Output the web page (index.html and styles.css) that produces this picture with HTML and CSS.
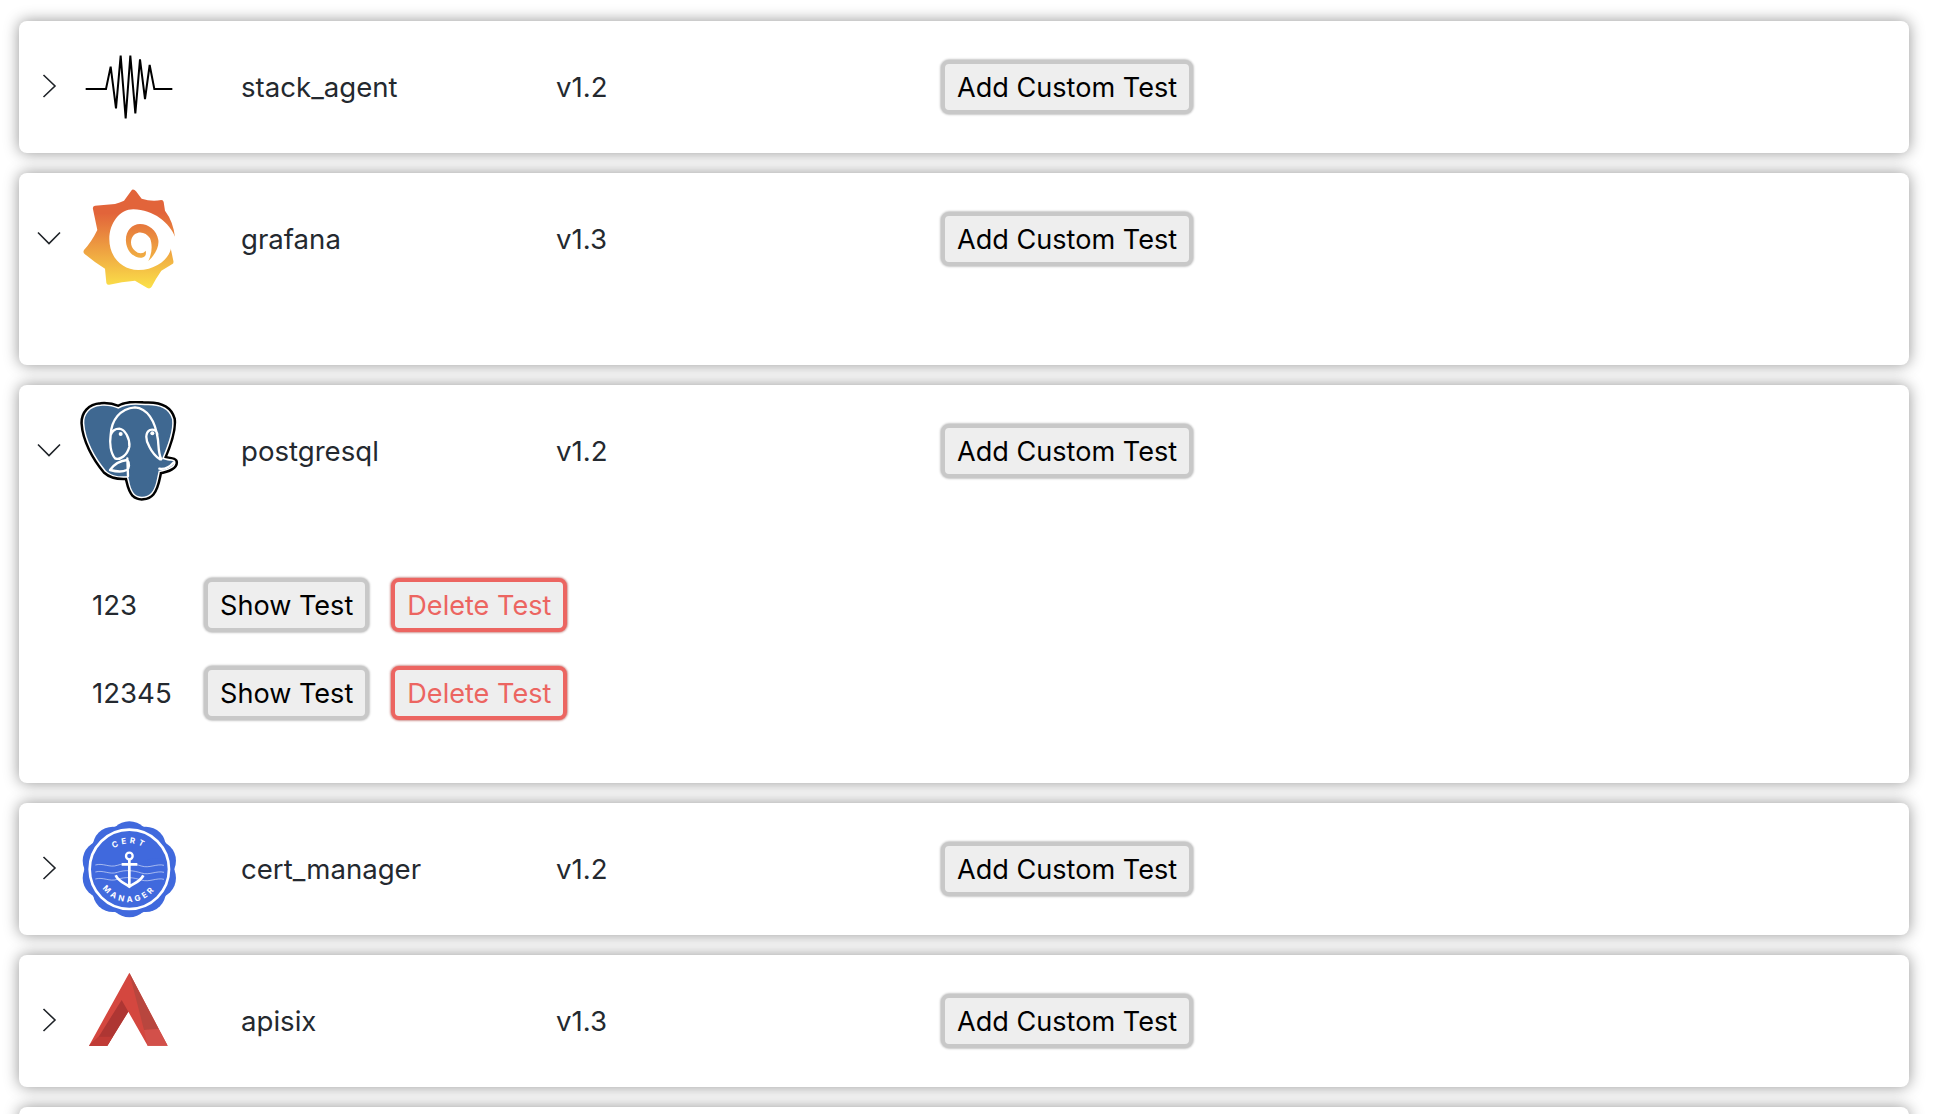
FILE: index.html
```html
<!DOCTYPE html>
<html lang="en">
<head>
<meta charset="utf-8">
<title>Tests</title>
<link rel="stylesheet" href="styles.css">
</head>
<body>
<main class="list">

  <section class="card">
    <div class="row">
      <svg class="chev" viewBox="0 0 26 26"><path d="M7.5 2 19 13 7.5 24"/></svg>
      <svg class="logo" viewBox="237 111 300 300"><polyline class="wave" points="257,267 318,267 332,200 348,325 362,167 377,355 391,167 406,340 420,178 435,297 449,195 463,267 517,267"/></svg>
      <span class="name">stack_agent</span>
      <span class="version">v1.2</span>
      <button class="btn">Add Custom Test</button>
    </div>
  </section>

  <section class="card">
    <div class="row">
      <svg class="chev" viewBox="0 0 26 26"><path d="M2 7.5 13 18.5 24 7.5"/></svg>
      <svg class="logo" viewBox="237 567 300 300">
        <defs>
          <linearGradient id="gf" gradientUnits="userSpaceOnUse" x1="0" y1="640" x2="0" y2="866">
            <stop offset="0" stop-color="#e2643a"/>
            <stop offset="1" stop-color="#fbe249"/>
          </linearGradient>
        </defs>
        <path fill="url(#gf)" d="M396 569 Q402 566 408 574 L425 596 Q455 606 484 600 Q490 600 491 606 L495 632 Q520 665 525 712 L512 745 L520 782 Q522 790 516 793 L484 812 Q468 835 455 860 Q450 868 442 864 L405 842 Q365 845 328 854 Q320 856 319 848 L315 806 Q285 788 254 762 Q248 757 252 750 Q275 725 292 690 L279 628 Q277 618 285 617 L345 612 Q360 608 372 602 Z"/>
        <path fill="#fff" d="M400 628 C360 628 328 668 328 718 C328 770 365 810 415 810 C470 810 508 775 513 745 L530 745 L530 712 L526 712 C510 670 460 628 400 628 Z"/>
        <path fill="url(#gf)" d="M445 783 C465 765 478 740 475 720 C470 690 445 672 420 672 C395 672 375 695 378 725 C380 755 405 776 425 773 C435 771 440 765 437 752 C430 762 415 762 405 752 C390 740 388 715 405 702 C420 692 440 698 450 715 C458 735 456 760 445 783 Z"/>
      </svg>
      <span class="name">grafana</span>
      <span class="version">v1.3</span>
      <button class="btn">Add Custom Test</button>
    </div>
    <div class="details"></div>
  </section>

  <section class="card">
    <div class="row">
      <svg class="chev" viewBox="0 0 26 26"><path d="M2 7.5 13 18.5 24 7.5"/></svg>
      <svg class="logo" viewBox="27 33 300 300">
        <defs>
          <path id="pg-shape" d="M92 48 C112 46 130 50 145 56 C165 44 195 42 225 46 C262 44 296 52 306 88 C310 120 294 165 276 206 C292 214 308 210 312 216 C314 226 298 238 266 242 C260 268 258 292 244 308 C232 322 206 324 194 312 C180 296 180 278 174 258 C152 260 128 260 108 242 C76 204 46 150 43 100 C42 72 60 50 92 48 Z"/>
        </defs>
        <use class="pg-black" href="#pg-shape"/>
        <use class="pg-white" href="#pg-shape"/>
        <use class="pg-fill" href="#pg-shape"/>
        <path class="pg-line" d="M122 135 C124 90 150 56 195 52 C230 54 256 90 264 150 C266 175 266 195 274 208 M122 135 C118 160 122 190 135 205 C150 212 172 195 178 170 C180 145 165 118 148 116 C135 116 126 124 122 135 Z M262 135 C262 122 250 116 240 120 C225 128 226 150 238 170 C248 190 258 200 270 208 M120 240 C130 226 148 212 172 210 C180 220 178 235 170 240 C155 248 135 244 120 240 M268 236 C282 238 298 232 310 218 M172 205 L174 258"/>
        <circle class="pg-eye" cx="152" cy="132" r="6"/>
        <circle class="pg-eye" cx="247" cy="130" r="6"/>
      </svg>
      <span class="name">postgresql</span>
      <span class="version">v1.2</span>
      <button class="btn">Add Custom Test</button>
    </div>
    <div class="details">
      <div class="test">
        <span class="test-name">123</span>
        <button class="btn show">Show Test</button>
        <button class="btn danger">Delete Test</button>
      </div>
      <div class="test">
        <span class="test-name">12345</span>
        <button class="btn show">Show Test</button>
        <button class="btn danger">Delete Test</button>
      </div>
    </div>
  </section>

  <section class="card">
    <div class="row">
      <svg class="chev" viewBox="0 0 26 26"><path d="M7.5 2 19 13 7.5 24"/></svg>
      <svg class="logo" viewBox="27 27 300 300">
        <g class="seal">
          <circle cx="178" cy="178" r="135"/>
          <circle cx="178" cy="94" r="60"/>
          <circle cx="227.4" cy="110" r="60"/>
          <circle cx="257.9" cy="152" r="60"/>
          <circle cx="257.9" cy="204" r="60"/>
          <circle cx="227.4" cy="246" r="60"/>
          <circle cx="178" cy="262" r="60"/>
          <circle cx="128.6" cy="246" r="60"/>
          <circle cx="98.1" cy="204" r="60"/>
          <circle cx="98.1" cy="152" r="60"/>
          <circle cx="128.6" cy="110" r="60"/>
        </g>
        <circle class="ring" cx="178" cy="178" r="119"/>
        <defs>
          <path id="arc-top" d="M100 178 A78 78 0 0 1 256 178"/>
          <path id="arc-bot" d="M80 178 A98 98 0 0 0 276 178"/>
        </defs>
        <text class="seal-text"><textPath href="#arc-top" startOffset="50%" text-anchor="middle">CERT</textPath></text>
        <text class="seal-text"><textPath href="#arc-bot" startOffset="50%" text-anchor="middle">MANAGER</textPath></text>
        <path class="sea" d="M76 165 C100 158 118 174 142 166 S190 160 214 168 S260 160 282 166 M76 186 C100 179 118 195 142 187 S190 181 214 189 S260 181 282 187 M76 207 C100 200 118 216 142 208 S190 202 214 210 S260 202 282 208"/>
        <circle class="anchor-eye" cx="178" cy="138" r="10"/>
        <path class="anchor" d="M178 149 V226 M155 163 H202 M137 196 C145 215 165 220 178 230 C191 220 211 215 220 196"/>
      </svg>
      <span class="name">cert_manager</span>
      <span class="version">v1.2</span>
      <button class="btn">Add Custom Test</button>
    </div>
  </section>

  <section class="card">
    <div class="row">
      <svg class="chev" viewBox="0 0 26 26"><path d="M7.5 2 19 13 7.5 24"/></svg>
      <svg class="logo" viewBox="237 543 300 300">
        <polygon fill="#d4473f" points="388,548 267,767 322,767 385,665 443,767 503,767"/>
        <polygon fill="#ae3633" points="365,630 385,665 322,767 267,767 296,740"/>
        <polygon fill="#c03b36" points="296,740 267,767 322,767 338,740"/>
        <polygon fill="#b8463e" points="388,548 476,717 432,720"/>
        <polygon fill="#d2504a" points="432,720 476,717 503,767 443,767"/>
      </svg>
      <span class="name">apisix</span>
      <span class="version">v1.3</span>
      <button class="btn">Add Custom Test</button>
    </div>
  </section>

  <section class="card"><div class="row"></div></section>

</main>
</body>
</html>
```

FILE: styles.css
```css
* { box-sizing: border-box; }

html, body {
  margin: 0;
  background: #fff;
}

body {
  font-family: Inter, "Liberation Sans", sans-serif;
  font-size: 27.6px;
  color: #24292f;
}

.list {
  display: flex;
  flex-direction: column;
  gap: 20px;
  height: 1114px;
  overflow: hidden;
  padding: 21px 29px 0 19px;
}

.card {
  flex: none;
  background: #fff;
  border-radius: 8px;
  box-shadow: 0 0 15px #949494;
}

.row {
  display: flex;
  align-items: center;
  height: 132px;
  padding-left: 17px;
}

.chev {
  flex: none;
  width: 26px;
  height: 26px;
  margin: 0 17px 2px 0;
  fill: none;
  stroke: #1f2328;
  stroke-width: 1.6;
}

.logo {
  flex: none;
  width: 100px;
  height: 100px;
  margin-right: 62px;
}

.name { flex: none; width: 315px; }
.version { flex: none; width: 385px; }

.btn {
  flex: none;
  height: 54px;
  padding: 0 12px;
  border: 4px solid #c8c8c8;
  border-radius: 8px;
  background: #eee;
  color: #000;
  font: inherit;
  font-size: 27.1px;
  box-shadow: 0 0 2px 1px #c8c8c8;
}

.danger {
  border-color: #ec6561;
  color: #ec6561;
  box-shadow: 0 0 2px 1px rgba(190, 110, 105, .7);
}

.show { margin-right: 22px; }

.details {
  min-height: 60px;
  padding: 44px 0 46px;
}

.details:empty { padding: 0; }

.test {
  display: flex;
  align-items: center;
  height: 88px;
  padding-left: 73px;
}

.test-name { flex: none; width: 112px; }

.wave { fill: none; stroke: #000; stroke-width: 6; }

.pg-black { fill: none; stroke: #000; stroke-width: 24; stroke-linejoin: round; }
.pg-white { fill: none; stroke: #fff; stroke-width: 9; stroke-linejoin: round; }
.pg-fill { fill: #3f6891; }
.pg-line { fill: none; stroke: #fff; stroke-width: 7; stroke-linecap: round; }
.pg-eye { fill: #fff; }

.seal { fill: #4069dd; }
.ring { fill: none; stroke: #fff; stroke-width: 8; }
.seal-text {
  fill: #fff;
  font-size: 24px;
  font-weight: 700;
  letter-spacing: 9px;
  font-family: Inter, sans-serif;
}
.sea { fill: none; stroke: #fff; stroke-width: 2; opacity: .8; }
.anchor { fill: none; stroke: #fff; stroke-width: 8; }
.anchor-eye { fill: none; stroke: #fff; stroke-width: 7; }
```
